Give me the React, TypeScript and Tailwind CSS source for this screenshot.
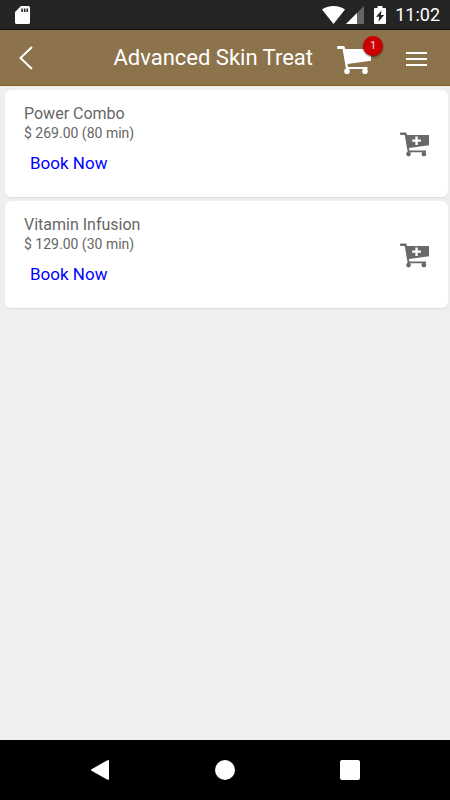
import type { ReactNode } from 'react';

type Treatment = {
  name: string;
  price: string;
  minutes: number;
};

const treatments: Treatment[] = [
  { name: 'Power Combo', price: '269.00', minutes: 80 },
  { name: 'Vitamin Infusion', price: '129.00', minutes: 30 }
];

const StatusBar = () => {
  return (
    <div className="h-[30px] shrink-0 flex items-center bg-[#242424] border-b border-[#111111] pl-[15px] pr-[10px] text-white">
      <svg width="15" height="18" viewBox="0 0 15 18" fill="currentColor">
        <path
          fillRule="evenodd"
          d="M6 0h7.500q1.500 0 1.500 1.500v15q0 1.500-1.500 1.500h-12Q0 18 0 16.500V6ZM6.300 2.500v3.500h1.600V2.500ZM8.900 2.500v3.500h1.600V2.500ZM11.500 2.500v3.500h1.600V2.500Z"
        />
      </svg>
      <div className="ml-auto flex items-center">
        <svg width="23" height="18" viewBox="0 0 23 18" fill="currentColor">
          <path d="M11.500 18 0 3.500C3 1.200 7 0 11.500 0S20 1.200 23 3.500Z" />
        </svg>
        <svg className="ml-px" width="18" height="18" viewBox="0 0 18 18" fill="currentColor">
          <path d="M18 0v18H0Z" opacity="0.3" />
          <path d="M11 7v11H0Z" />
        </svg>
        <svg className="ml-[10px]" width="12" height="18" viewBox="0 0 12 18">
          <path d="M3.500 0h5v2H11q1 0 1 1v14q0 1-1 1H1q-1 0-1-1V3q0-1 1-1h2.500Z" fill="currentColor" />
          <path d="M7.500 4.500 2 10.800H5.200l-.7 5L10.200 9H6.900Z" fill="#242424" />
        </svg>
        <span className="ml-[9px] text-lg leading-[30px]">11:02</span>
      </div>
    </div>
  );
};

const CartShape = ({ children }: { children?: ReactNode }) => {
  return (
    <>
      <path
        d="M1 0H6.500q.8 0 1.100.8L8.300 3H34v11.800L10.400 18l.6 3H30.500v2H9L5.600 3H1Q0 3 0 1.500T1 0Z"
        fill="currentColor"
      />
      <circle cx="10" cy="25.200" r="2.800" fill="currentColor" />
      <circle cx="28" cy="25.200" r="2.800" fill="currentColor" />
      {children}
    </>
  );
};

const Header = ({ title, cartCount }: { title: string; cartCount: number }) => {
  return (
    <header className="h-14 shrink-0 flex items-center bg-[#8c734b] border-b border-[#865f18] text-white">
      <button type="button" aria-label="Back" className="w-[52px] h-full pl-[19px]">
        <svg width="14" height="24" viewBox="0 0 14 24" fill="none" stroke="currentColor" strokeWidth="2">
          <path d="M13 1 1.500 12 13 23" />
        </svg>
      </button>
      <h1 className="flex-1 text-right text-[22px] leading-7">{title}</h1>
      <button type="button" aria-label="Cart" className="relative ml-6 w-[46px] h-full pt-1">
        <svg width="34" height="28" viewBox="0 0 34 28">
          <CartShape />
        </svg>
        <span className="absolute right-0 top-[6px] size-5 rounded-full bg-[#cc0000] text-[11px] leading-5 text-white/85 text-center shadow-[0_1px_2px_rgba(0,0,0,0.6)]">
          {cartCount}
        </span>
      </button>
      <button type="button" aria-label="Menu" className="ml-[23px] mr-[23px] h-full pt-0.5">
        <svg width="21" height="14" viewBox="0 0 21 14" fill="currentColor">
          <path d="M0 0h21v2H0ZM0 6h21v2H0ZM0 12h21v2H0Z" />
        </svg>
      </button>
    </header>
  );
};

const TreatmentCard = ({ name, price, minutes }: Treatment) => {
  return (
    <li className="flex items-center rounded-md bg-white pl-[19px] pr-[19px] pt-[14px] pb-[21px] shadow-[0_1px_1px_rgba(0,0,0,0.08)]">
      <div className="flex-1 text-[#666666]">
        <h2 className="text-base leading-5">{name}</h2>
        <p className="text-sm leading-[18px]">
          $ {price} ({minutes} min)
        </p>
        <a href="#book" className="ml-[6px] mt-2 block w-fit text-[17px] leading-[26px] text-[#0000ff]">
          Book Now
        </a>
      </div>
      <button type="button" aria-label={`Add ${name} to cart`} className="mt-2 text-[#696969]">
        <svg width="29" height="25" viewBox="0 0 34 28">
          <CartShape>
            <path d="M18 4.500h2.800v3.600H24.500v2.800H20.800v3.600H18v-3.600H14.300v-2.800H18Z" fill="white" />
          </CartShape>
        </svg>
      </button>
    </li>
  );
};

const NavigationBar = () => {
  return (
    <nav className="h-[60px] shrink-0 flex items-center justify-center gap-[105px] bg-black text-white">
      <button type="button" aria-label="Back">
        <svg width="20" height="20" viewBox="0 0 20 20" fill="currentColor">
          <path d="M17.500.2q1.500-.6 1.500 1v17.600q0 1.600-1.500 1L1.500 10.800q-1-.8 0-1.600Z" />
        </svg>
      </button>
      <button type="button" aria-label="Home" className="size-5 rounded-full bg-white" />
      <button type="button" aria-label="Recent apps" className="size-5 rounded-xs bg-white" />
    </nav>
  );
};

export default function App() {
  return (
    <div className="min-h-screen flex flex-col bg-[#efefef] font-['Roboto',sans-serif]">
      <StatusBar />
      <Header title="Advanced Skin Treat" cartCount={1} />
      <main className="flex-1 pt-1 pl-[5px] pr-[2px]">
        <ul className="flex flex-col gap-1">
          {treatments.map((treatment) => (
            <TreatmentCard key={treatment.name} {...treatment} />
          ))}
        </ul>
      </main>
      <NavigationBar />
    </div>
  );
}
